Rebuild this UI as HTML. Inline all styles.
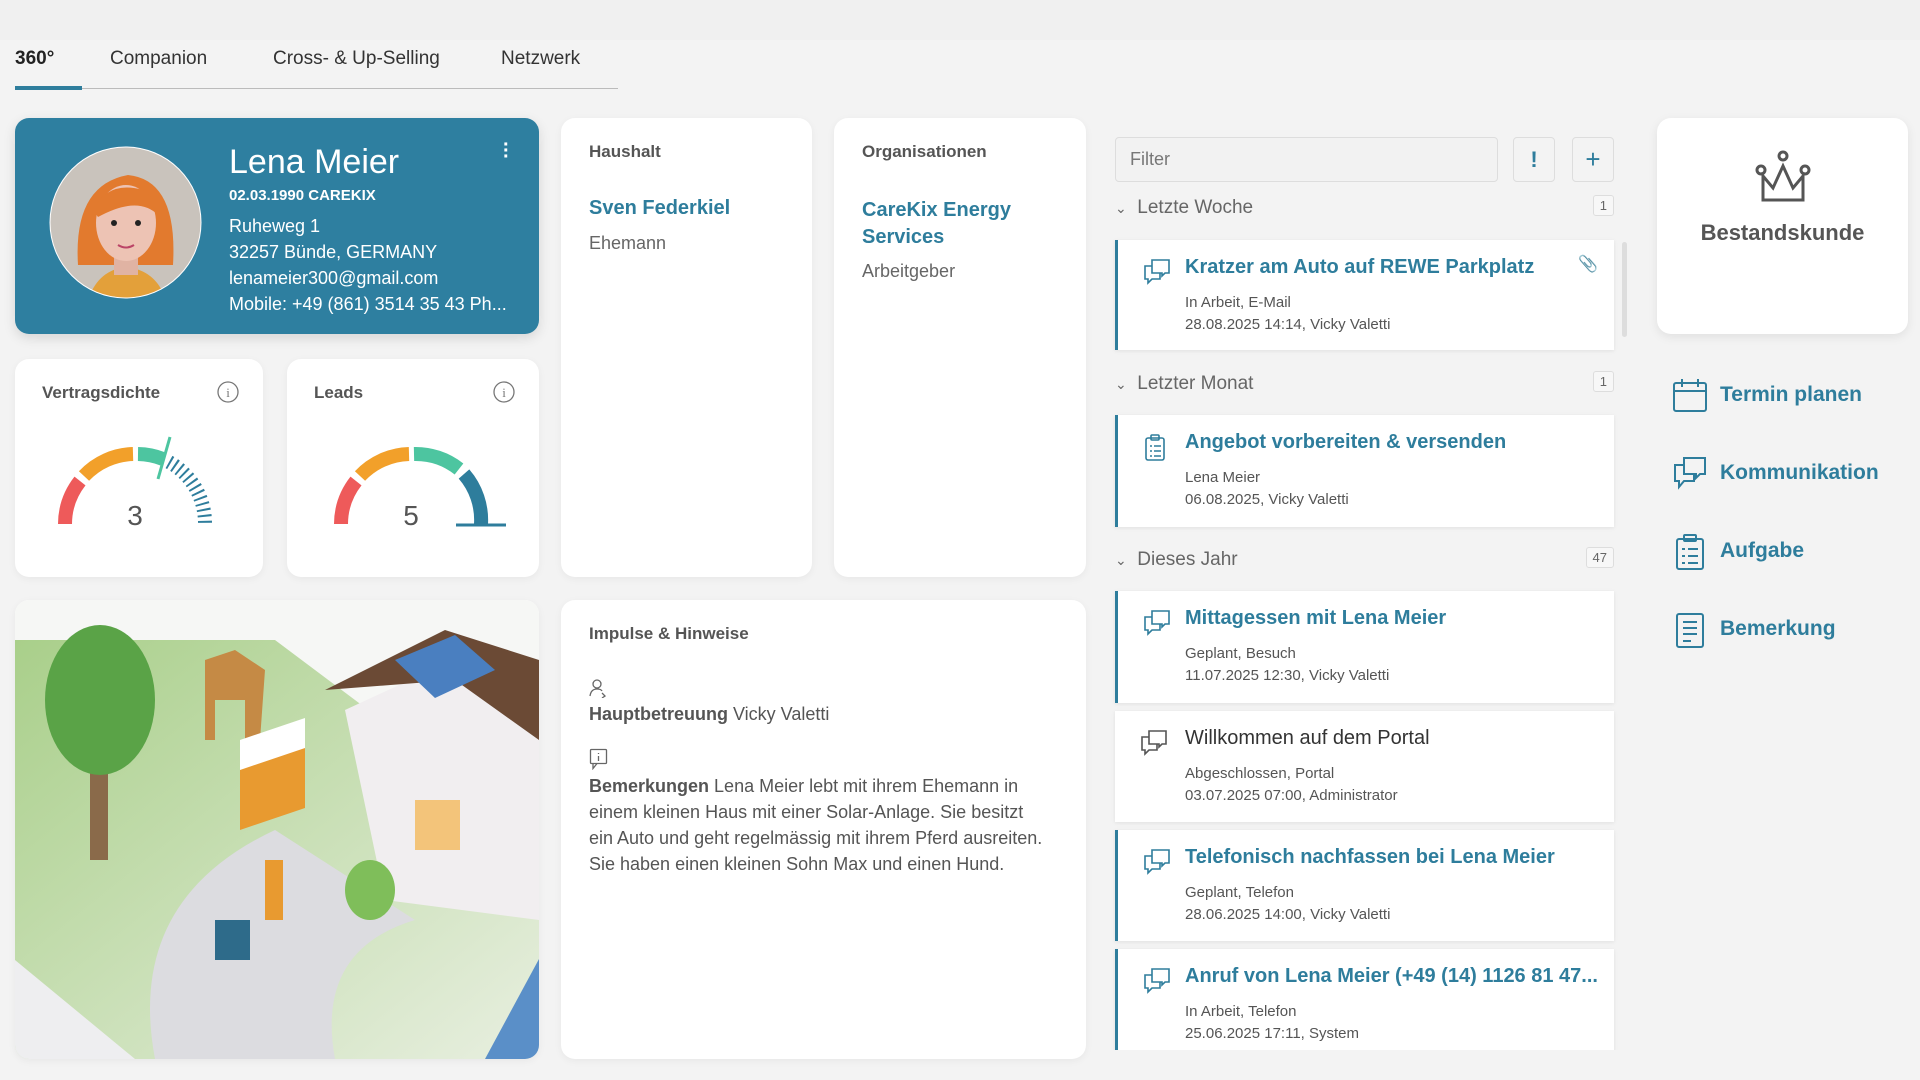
<!DOCTYPE html>
<html><head><meta charset="utf-8"><style>
*{box-sizing:border-box;margin:0;padding:0}
body{width:1920px;height:1080px;background:#f3f3f3;font-family:"Liberation Sans",sans-serif;color:#555;position:relative;overflow:hidden}
.abs{position:absolute}
.card{position:absolute;background:#fff;border-radius:14px;box-shadow:0 2px 8px rgba(0,0,0,.05)}
.tab{position:absolute;top:48px;font-size:19px;color:#333}
.h{font-size:17px;font-weight:bold;color:#555}
.link{color:#2e7d9c;font-weight:bold}
.tl{position:absolute;left:1115px;width:499px;background:#fff;box-shadow:0 1px 4px rgba(0,0,0,.08)}
.tl.b{border-left:3px solid #2e7d9c}
.tl .t{position:absolute;left:67px;top:16px;font-size:20px;font-weight:bold;color:#2e7d9c;white-space:nowrap}
.tl .s{position:absolute;left:67px;top:52px;font-size:15px;line-height:22px;color:#555}
.tl svg{position:absolute;left:25px;top:18px}
.grp{position:absolute;left:1115px;width:499px;font-size:19px;color:#666}
.grp .n{position:absolute;right:0;top:-2px;border:1px solid #ddd;border-radius:3px;font-size:13px;padding:2px 6px;color:#666;background:#f7f7f7}
.act{position:absolute;left:1672px;font-size:21px;font-weight:bold;color:#2e7d9c}
.act svg{position:absolute;left:0;top:-6px}
.act span{position:absolute;left:48px;top:0;white-space:nowrap}
</style></head><body>
<div class="abs" style="left:0;top:0;width:1920px;height:40px;background:#f0f0f0"></div>
<div class="tab" style="left:15px;font-weight:bold;color:#222">360°</div>
<div class="tab" style="left:110px">Companion</div>
<div class="tab" style="left:273px">Cross- &amp; Up-Selling</div>
<div class="tab" style="left:501px">Netzwerk</div>
<div class="abs" style="left:15px;top:88px;width:603px;height:1px;background:#bbb"></div>
<div class="abs" style="left:15px;top:86px;width:67px;height:4px;background:#2e7d9c"></div>

<!-- profile -->
<div class="card" style="left:15px;top:118px;width:524px;height:216px;background:#2e7fa0;box-shadow:0 4px 12px rgba(0,0,0,.12)">
<svg class="abs" style="left:33px;top:27px" width="155" height="155" viewBox="0 0 155 155">
<defs><clipPath id="c"><circle cx="77.5" cy="77.5" r="75"/></clipPath></defs>
<circle cx="77.5" cy="77.5" r="76" fill="#fff"/>
<g clip-path="url(#c)"><rect width="155" height="155" fill="#c9c3bc"/>
<path d="M30 120 Q25 40 80 30 Q130 35 125 120 Z" fill="#e27a2e"/>
<path d="M40 155 Q50 125 78 122 Q108 125 118 155Z" fill="#e3a03a"/>
<rect x="66" y="100" width="24" height="30" fill="#e0b3a3"/>
<ellipse cx="78" cy="78" rx="30" ry="38" fill="#edc3b4"/>
<path d="M45 65 Q60 35 95 45 Q110 55 110 70 Q90 50 50 72Z" fill="#e27a2e"/>
<circle cx="66" cy="78" r="3" fill="#222"/><circle cx="90" cy="78" r="3" fill="#222"/>
<path d="M70 100 Q78 105 86 100" stroke="#b46" stroke-width="2" fill="none"/></g>
</svg>
<div class="abs" style="left:214px;top:25px;font-size:34px;color:#fff">Lena Meier</div>
<div class="abs" style="left:214px;top:69px;font-size:15px;font-weight:bold;color:#fff">02.03.1990 CAREKIX</div>
<div class="abs" style="left:214px;top:95px;font-size:18px;line-height:26px;color:#fff;white-space:nowrap">Ruheweg 1<br>32257 Bünde, GERMANY<br>lenameier300@gmail.com<br>Mobile: +49 (861) 3514 35 43 Ph...</div>
<div class="abs" style="left:488px;top:24px;color:#fff;font-size:20px;line-height:6px;font-weight:bold">·<br>·<br>·</div>
</div>

<!-- gauges -->
<div class="card" style="left:15px;top:359px;width:248px;height:218px">
<div class="h abs" style="left:27px;top:24px">Vertragsdichte</div>
<svg class="abs" style="left:202px;top:22px" width="22" height="22"><circle cx="11" cy="11" r="10" fill="none" stroke="#777" stroke-width="1.3"/><text x="11" y="16" font-size="13" text-anchor="middle" fill="#777" font-family="Liberation Serif">i</text></svg>
<svg class="abs" style="left:40px;top:70px" width="170" height="110" viewBox="0 0 170 110">
<path d="M10 95 A70 70 0 0 1 25 52" stroke="#ee5a5a" stroke-width="14" fill="none"/>
<path d="M29 47 A70 70 0 0 1 78 25" stroke="#f2a02a" stroke-width="14" fill="none"/>
<path d="M83 25 A70 70 0 0 1 108 30" stroke="#4dc5a0" stroke-width="14" fill="none"/>
<path d="M114 33 A70 70 0 0 1 150 95" stroke="#2e7d9c" stroke-width="14" fill="none" stroke-dasharray="2 4"/>
<line x1="103" y1="50" x2="115" y2="8" stroke="#4dc5a0" stroke-width="3"/>
<text x="80" y="96" font-size="28" text-anchor="middle" fill="#555">3</text></svg>
</div>
<div class="card" style="left:287px;top:359px;width:252px;height:218px">
<div class="h abs" style="left:27px;top:24px">Leads</div>
<svg class="abs" style="left:206px;top:22px" width="22" height="22"><circle cx="11" cy="11" r="10" fill="none" stroke="#777" stroke-width="1.3"/><text x="11" y="16" font-size="13" text-anchor="middle" fill="#777" font-family="Liberation Serif">i</text></svg>
<svg class="abs" style="left:44px;top:70px" width="180" height="110" viewBox="0 0 180 110">
<path d="M10 95 A70 70 0 0 1 25 52" stroke="#ee5a5a" stroke-width="14" fill="none"/>
<path d="M29 47 A70 70 0 0 1 78 25" stroke="#f2a02a" stroke-width="14" fill="none"/>
<path d="M83 25 A70 70 0 0 1 128 40" stroke="#4dc5a0" stroke-width="14" fill="none"/>
<path d="M133 45 A70 70 0 0 1 150 95" stroke="#2e7d9c" stroke-width="14" fill="none"/>
<line x1="125" y1="96" x2="175" y2="96" stroke="#2e7d9c" stroke-width="3"/>
<text x="80" y="96" font-size="28" text-anchor="middle" fill="#555">5</text></svg>
</div>

<!-- illustration -->
<div class="card" style="left:15px;top:600px;width:524px;height:459px;overflow:hidden">
<svg width="524" height="459" viewBox="0 0 524 459">
<defs><linearGradient id="g" x1="0" y1="0" x2="1" y2="1"><stop offset="0" stop-color="#a9cf8a"/><stop offset="1" stop-color="#e8efe0"/></linearGradient></defs>
<rect width="524" height="459" fill="#f6f7f5"/>
<path d="M0 40 L260 40 L380 130 L524 200 L524 459 L0 459Z" fill="url(#g)"/>
<path d="M140 459 Q110 300 260 230 L400 320 Q300 350 320 459Z" fill="#dcdce0"/>
<path d="M0 360 L120 459 L0 459Z" fill="#eeeef0"/>
<rect x="75" y="120" width="18" height="140" fill="#8a6a4a"/>
<ellipse cx="85" cy="100" rx="55" ry="75" fill="#5aa347"/>
<path d="M190 60 l30 -10 l30 20 l-5 70 l-15 0 l0 -40 l-30 0 l0 40 l-10 0z" fill="#c58a45"/>
<path d="M330 110 L460 50 L524 90 L524 320 L370 300 Z" fill="#f1eef0"/>
<path d="M310 90 L430 30 L524 60 L524 140 L440 80 Z" fill="#6b4a35"/>
<path d="M380 60 l60 -25 l40 35 l-60 28z" fill="#4a7fc0"/>
<rect x="400" y="200" width="45" height="50" fill="#f3c47a"/>
<path d="M225 150 l65 -22 l0 80 l-65 22z" fill="#e89a30"/><path d="M225 140 l65 -22 l0 30 l-65 22z" fill="#fff"/>
<rect x="250" y="260" width="18" height="60" fill="#e89a30"/><rect x="200" y="320" width="35" height="40" fill="#2e6b8a"/>
<ellipse cx="355" cy="290" rx="25" ry="30" fill="#7fbe5a"/>
<path d="M470 459 l54 -100 l0 100z" fill="#5a8fc8"/>
</svg></div>

<!-- Haushalt -->
<div class="card" style="left:561px;top:118px;width:251px;height:459px">
<div class="h abs" style="left:28px;top:24px">Haushalt</div>
<div class="abs link" style="left:28px;top:79px;font-size:20px">Sven Federkiel</div>
<div class="abs" style="left:28px;top:115px;font-size:18px;color:#666">Ehemann</div>
</div>
<div class="card" style="left:834px;top:118px;width:252px;height:459px">
<div class="h abs" style="left:28px;top:24px">Organisationen</div>
<div class="abs link" style="left:28px;top:79px;font-size:20px;line-height:27px">CareKix Energy<br>Services</div>
<div class="abs" style="left:28px;top:143px;font-size:18px;color:#666">Arbeitgeber</div>
</div>

<!-- Impulse -->
<div class="card" style="left:561px;top:600px;width:525px;height:459px">
<div class="h abs" style="left:28px;top:24px">Impulse &amp; Hinweise</div>
<svg class="abs" style="left:28px;top:78px" width="20" height="20" fill="none" stroke="#666" stroke-width="1.3"><circle cx="8" cy="6" r="4"/><path d="M1 18 Q2 11 8 11 Q12 11 13 13 M13 15 l3 3 l-3 2"/></svg>
<div class="abs" style="left:28px;top:104px;font-size:18px;color:#555"><b>Hauptbetreuung</b> Vicky Valetti</div>
<svg class="abs" style="left:28px;top:148px" width="20" height="22" fill="none" stroke="#666" stroke-width="1.3"><rect x="1.5" y="1.5" width="16" height="14" rx="1"/><path d="M4 15.5 l0 5 l4 -5"/><path d="M9.5 5v1M9.5 8v5"/></svg>
<div class="abs" style="left:28px;top:173px;width:455px;font-size:18px;line-height:26px;color:#555"><b>Bemerkungen</b> Lena Meier lebt mit ihrem Ehemann in einem kleinen Haus mit einer Solar-Anlage. Sie besitzt ein Auto und geht regelmässig mit ihrem Pferd ausreiten. Sie haben einen kleinen Sohn Max und einen Hund.</div>
</div>

<!-- timeline -->
<div class="abs" style="left:1115px;top:137px;width:383px;height:45px;border:1px solid #ddd;border-radius:4px;background:#f2f2f2;font-size:18px;color:#777;padding:11px 14px">Filter</div>
<div class="abs" style="left:1513px;top:137px;width:42px;height:45px;border:1px solid #ddd;border-radius:4px;color:#2e7d9c;font-weight:bold;font-size:22px;text-align:center;line-height:43px">!</div>
<div class="abs" style="left:1572px;top:137px;width:42px;height:45px;border:1px solid #ddd;border-radius:4px;color:#2e7d9c;font-size:26px;text-align:center;line-height:42px">+</div>

<div class="grp" style="top:197px"><span style="font-size:14px">&#8964;</span>&nbsp; Letzte Woche<span class="n">1</span></div>
<div class="abs" style="left:1622px;top:242px;width:5px;height:95px;background:#ddd;border-radius:3px"></div>
<div class="tl b" style="top:240px;height:110px"><svg width="30" height="28" fill="none" stroke="#2e7d9c" stroke-width="1.6"><path d="M9 2h17v13h-4l-3 3v-3H9z"/><path d="M9 8H2v13h3v4l4-4h8v-6"/></svg><div class="t">Kratzer am Auto auf REWE Parkplatz</div><div class="s">In Arbeit, E-Mail<br>28.08.2025 14:14, Vicky Valetti</div><div class="abs" style="right:16px;top:14px;color:#2e7d9c;font-size:16px">&#128206;</div></div>

<div class="grp" style="top:373px"><span style="font-size:14px">&#8964;</span>&nbsp; Letzter Monat<span class="n">1</span></div>
<div class="tl b" style="top:415px;height:112px"><svg width="30" height="30" fill="none" stroke="#2e7d9c" stroke-width="1.6"><rect x="3" y="5" width="18" height="22" rx="2"/><rect x="8" y="2" width="8" height="5" rx="1"/><path d="M7 13h2M11 13h7M7 18h2M11 18h7M7 23h2M11 23h7"/></svg><div class="t">Angebot vorbereiten &amp; versenden</div><div class="s">Lena Meier<br>06.08.2025, Vicky Valetti</div></div>

<div class="grp" style="top:549px"><span style="font-size:14px">&#8964;</span>&nbsp; Dieses Jahr<span class="n">47</span></div>
<div class="tl b" style="top:591px;height:112px"><svg width="30" height="28" fill="none" stroke="#2e7d9c" stroke-width="1.6"><path d="M9 2h17v13h-4l-3 3v-3H9z"/><path d="M9 8H2v13h3v4l4-4h8v-6"/></svg><div class="t">Mittagessen mit Lena Meier</div><div class="s">Geplant, Besuch<br>11.07.2025 12:30, Vicky Valetti</div></div>
<div class="tl" style="top:711px;height:111px;padding-left:3px"><svg width="30" height="28" fill="none" stroke="#555" stroke-width="1.6"><path d="M9 2h17v13h-4l-3 3v-3H9z"/><path d="M9 8H2v13h3v4l4-4h8v-6"/></svg><div class="t" style="color:#333;font-weight:normal;left:70px">Willkommen auf dem Portal</div><div class="s" style="left:70px">Abgeschlossen, Portal<br>03.07.2025 07:00, Administrator</div></div>
<div class="tl b" style="top:830px;height:111px"><svg width="30" height="28" fill="none" stroke="#2e7d9c" stroke-width="1.6"><path d="M9 2h17v13h-4l-3 3v-3H9z"/><path d="M9 8H2v13h3v4l4-4h8v-6"/></svg><div class="t">Telefonisch nachfassen bei Lena Meier</div><div class="s">Geplant, Telefon<br>28.06.2025 14:00, Vicky Valetti</div></div>
<div class="tl b" style="top:949px;height:104px;overflow:hidden"><svg width="30" height="28" fill="none" stroke="#2e7d9c" stroke-width="1.6"><path d="M9 2h17v13h-4l-3 3v-3H9z"/><path d="M9 8H2v13h3v4l4-4h8v-6"/></svg><div class="t">Anruf von Lena Meier (+49 (14) 1126 81 47...</div><div class="s">In Arbeit, Telefon<br>25.06.2025 17:11, System</div></div>
<div class="abs" style="left:1110px;top:1050px;width:510px;height:30px;background:#f3f3f3"></div>

<!-- right -->
<div class="card" style="left:1657px;top:118px;width:251px;height:216px;box-shadow:0 3px 10px rgba(0,0,0,.08)">
<svg class="abs" style="left:96px;top:30px" width="60" height="56" fill="none" stroke="#555" stroke-width="3"><path d="M10 52V28l10 12 10-22 10 22 10-12v24z"/><circle cx="8" cy="22" r="4"/><circle cx="30" cy="8" r="4"/><circle cx="52" cy="22" r="4"/></svg>
<div class="abs" style="left:0;width:251px;top:102px;text-align:center;font-size:22px;font-weight:bold;color:#555">Bestandskunde</div>
</div>
<div class="act" style="top:383px"><svg width="36" height="36" fill="none" stroke="#2e7d9c" stroke-width="2"><rect x="2" y="6" width="32" height="28" rx="2"/><path d="M2 14h32M10 2v8M26 2v8"/></svg><span>Termin planen</span></div>
<div class="act" style="top:461px"><svg width="36" height="36" fill="none" stroke="#2e7d9c" stroke-width="2"><path d="M12 3h21v16h-5l-4 4v-4H12z"/><path d="M12 10H3v16h4v6l5-6h10v-7"/></svg><span>Kommunikation</span></div>
<div class="act" style="top:539px"><svg width="36" height="38" fill="none" stroke="#2e7d9c" stroke-width="2"><rect x="5" y="6" width="26" height="30" rx="2"/><rect x="12" y="2" width="12" height="6" rx="1"/><path d="M10 16h3M16 16h10M10 23h3M16 23h10M10 30h3M16 30h10"/></svg><span>Aufgabe</span></div>
<div class="act" style="top:617px"><svg width="36" height="38" fill="none" stroke="#2e7d9c" stroke-width="2"><rect x="5" y="3" width="26" height="33" rx="2"/><path d="M11 11h14M11 17h14M11 23h14M11 30h8"/></svg><span>Bemerkung</span></div>
</body></html>
